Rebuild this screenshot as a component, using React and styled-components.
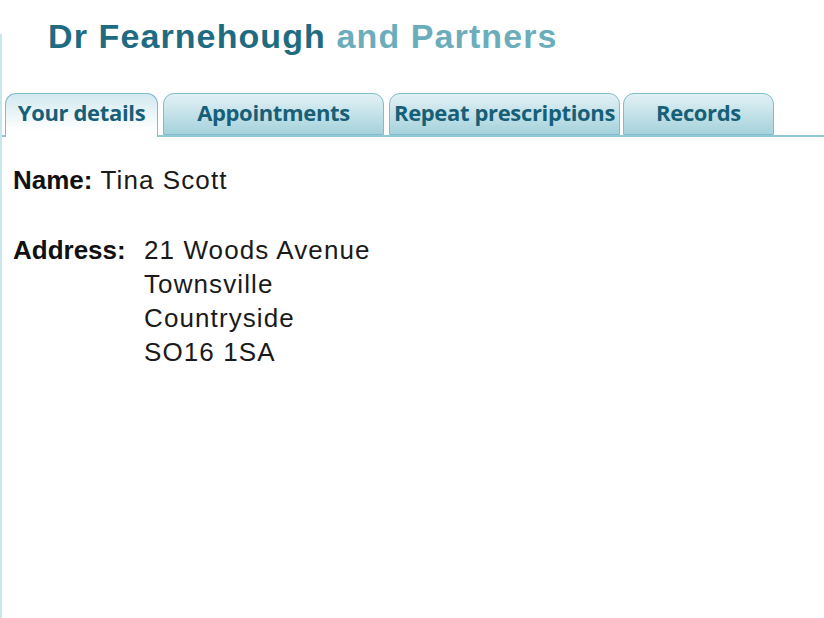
import React from "react";
import styled, { createGlobalStyle } from "styled-components";

const Global = createGlobalStyle`
  html, body { margin: 0; padding: 0; background: #ffffff; }
  body { font-family: "Liberation Sans", Arial, sans-serif; }
`;

const Frame = styled.div`
  display: flow-root;
  margin-top: 34px;
  min-height: calc(100vh - 34px);
  border-left: 2px solid #c9e6ed;
  box-sizing: border-box;
`;

const Title = styled.h1`
  margin: -18px 0 0 0;
  padding-left: 46px;
  font-family: "Liberation Sans", Arial, sans-serif;
  font-weight: 700;
  font-size: 34px;
  line-height: 40px;
  letter-spacing: 1.1px;
  color: #1e6b82;
`;

const Light = styled.span`
  color: #6badbb;
`;

const TabBar = styled.div`
  display: flex;
  align-items: flex-end;
  margin-top: 37px;
  padding-left: 3px;
  border-bottom: 2px solid #93c9d4;
  height: 42px;
`;

const Tab = styled.div`
  box-sizing: border-box;
  width: ${(p) => p.$w}px;
  margin-left: ${(p) => p.$gap}px;
  height: ${(p) => (p.$active ? 44 : 42)}px;
  margin-bottom: ${(p) => (p.$active ? -2 : 0)}px;
  border: 1.5px solid #80bccb;
  border-bottom: ${(p) => (p.$active ? "none" : "1.5px solid #80bccb")};
  border-radius: 11px 11px 0 0;
  background: ${(p) =>
    p.$active
      ? "linear-gradient(#d2e9ef, #ffffff 85%)"
      : "linear-gradient(#e2f1f5, #a5d2dc)"};
  display: flex;
  justify-content: center;
  padding-top: 3px;
  font-family: "Open Sans", sans-serif;
  font-weight: 700;
  font-size: 22px;
  letter-spacing: -0.35px;
  line-height: 30px;
  color: #175f77;
`;

const Content = styled.div`
  padding: 26px 0 0 11px;
  font-size: 26px;
  line-height: 34px;
  color: #1a1a1a;
`;

const NameRow = styled.div`
  display: flex;
  gap: 8px;
  margin-bottom: 36px;
`;

const AddressRow = styled.div`
  display: grid;
  grid-template-columns: 131px auto;
`;

const Label = styled.span`
  font-weight: 700;
  color: #111;
`;

const Value = styled.div`
  letter-spacing: 1.1px;
`;

const tabs = [
  { label: "Your details", w: 153, gap: 0, active: true },
  { label: "Appointments", w: 221, gap: 5 },
  { label: "Repeat prescriptions", w: 231, gap: 5 },
  { label: "Records", w: 151, gap: 3 },
];

export default function App() {
  return (
    <>
      <Global />
      <Frame>
        <Title>
          Dr Fearnehough <Light>and Partners</Light>
        </Title>
        <TabBar>
          {tabs.map((t) => (
            <Tab key={t.label} $w={t.w} $gap={t.gap} $active={t.active}>
              {t.label}
            </Tab>
          ))}
        </TabBar>
        <Content>
          <NameRow>
            <Label>Name:</Label>
            <Value>Tina Scott</Value>
          </NameRow>
          <AddressRow>
            <Label>Address:</Label>
            <Value>
              21 Woods Avenue
              <br />
              Townsville
              <br />
              Countryside
              <br />
              SO16 1SA
            </Value>
          </AddressRow>
        </Content>
      </Frame>
    </>
  );
}
